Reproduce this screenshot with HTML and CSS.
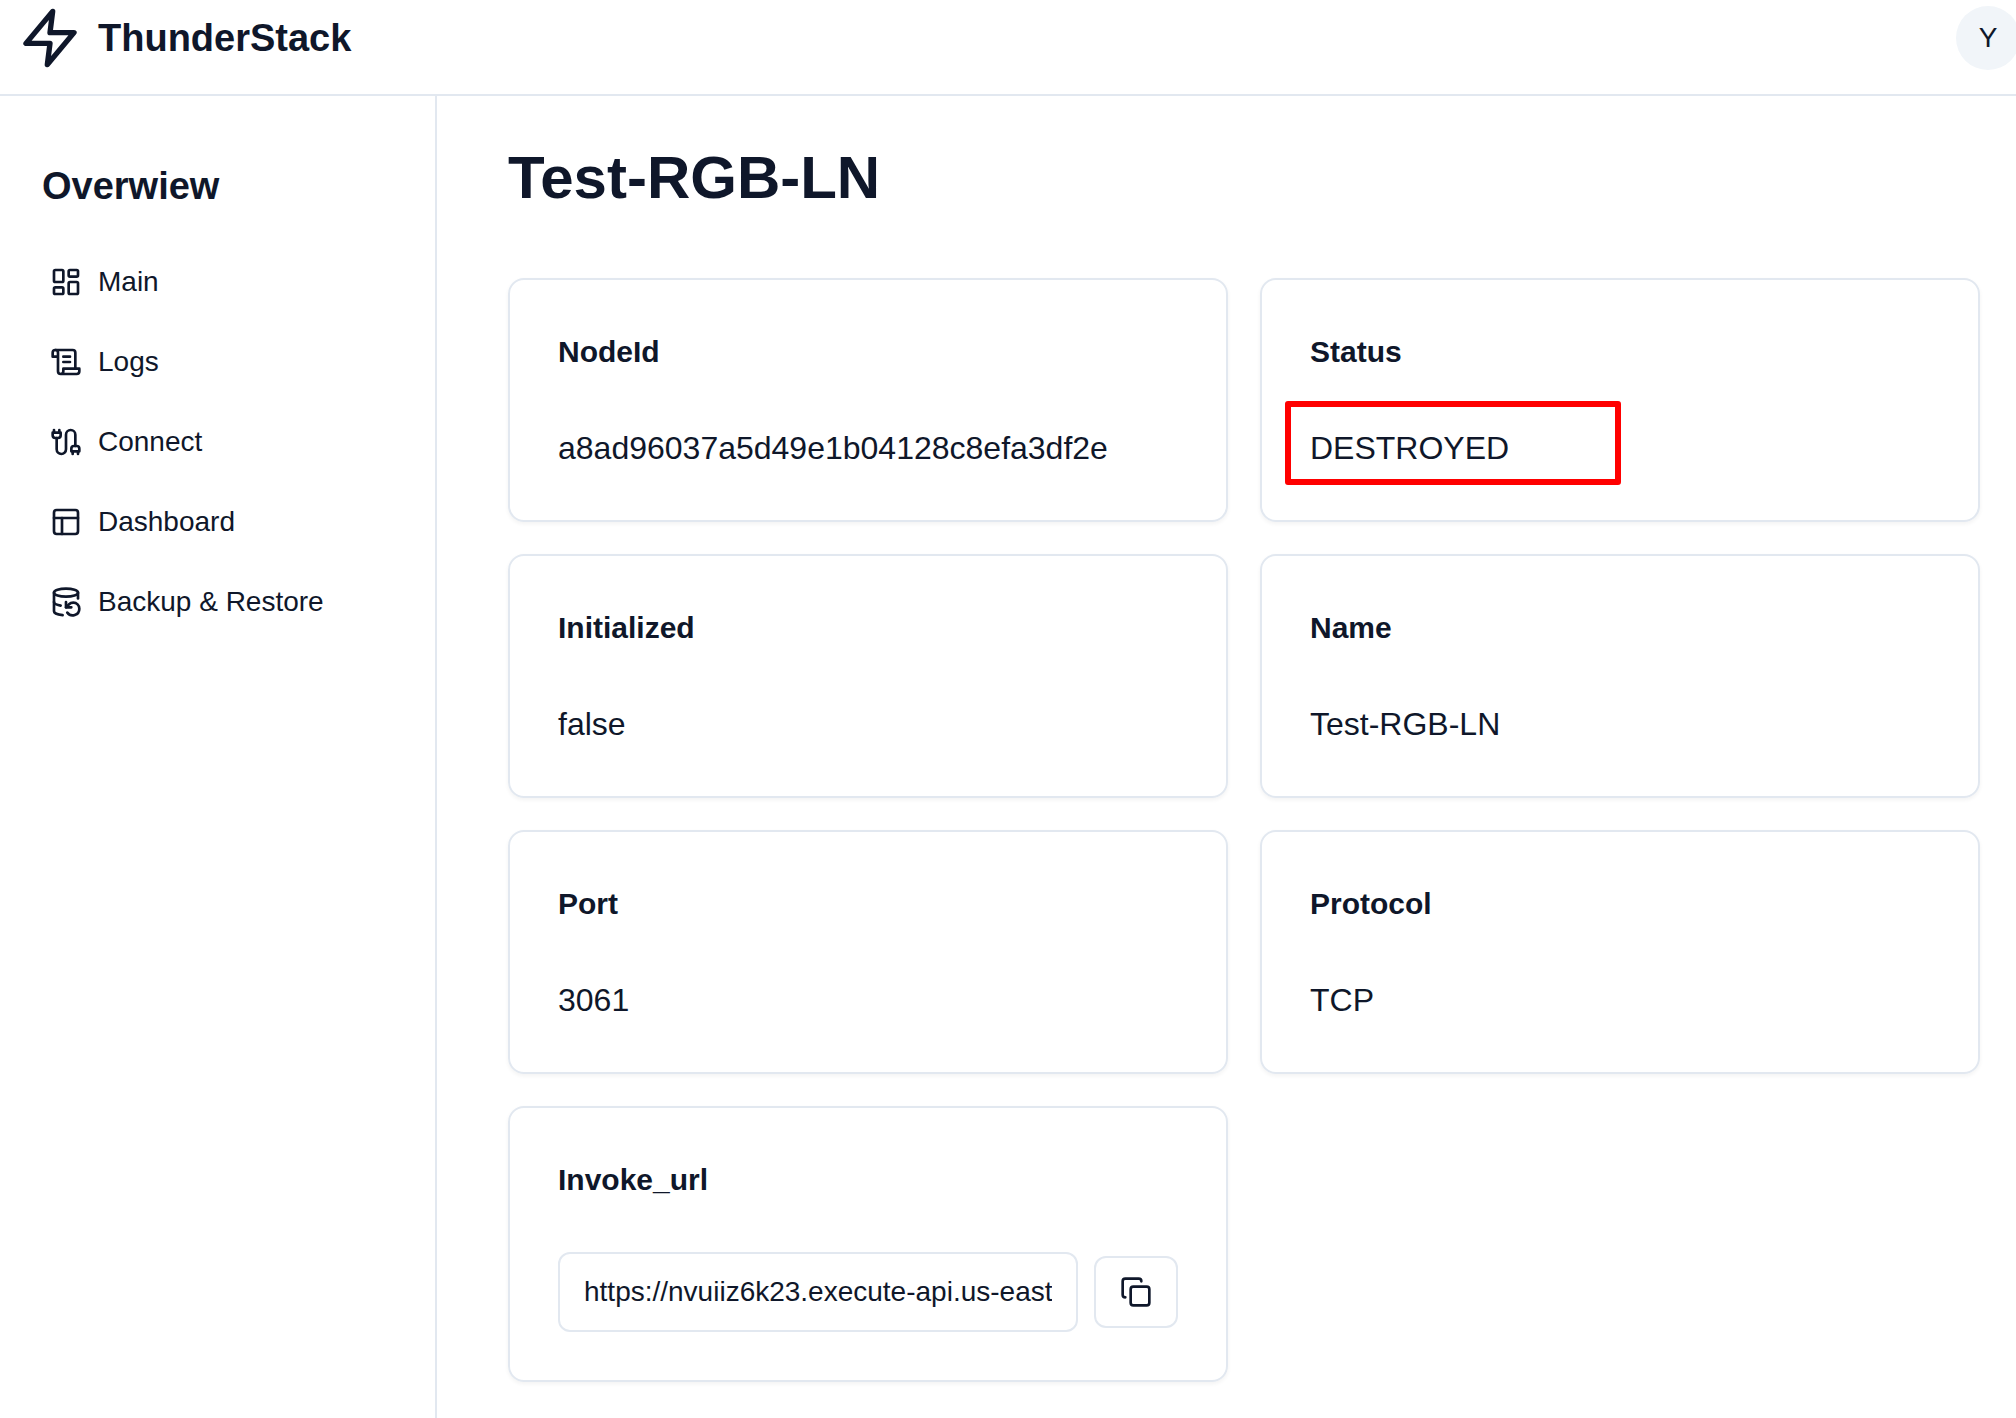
FILE: index.html
```html
<!DOCTYPE html>
<html lang="en">
<head>
  <meta charset="utf-8">
  <meta name="viewport" content="width=device-width, initial-scale=1">
  <title>ThunderStack</title>
  <link rel="stylesheet" href="styles.css">
</head>
<body>
  <header class="header">
    <a class="brand" href="#">
      <svg class="icon brand-icon" viewBox="0 0 24 24" aria-hidden="true"><polygon points="13 2 3 14 12 14 11 22 21 10 12 10 13 2"/></svg>
      <span>ThunderStack</span>
    </a>
    <button class="avatar" type="button">Y</button>
  </header>
  <div class="shell">
    <aside class="sidebar">
      <h2 class="sidebar-title">Overwiew</h2>
      <nav class="nav">
        <a class="nav-item" href="#">
          <svg class="icon" viewBox="0 0 24 24" aria-hidden="true"><rect width="7" height="9" x="3" y="3" rx="1"/><rect width="7" height="5" x="14" y="3" rx="1"/><rect width="7" height="9" x="14" y="12" rx="1"/><rect width="7" height="5" x="3" y="16" rx="1"/></svg>
          <span>Main</span>
        </a>
        <a class="nav-item" href="#">
          <svg class="icon" viewBox="0 0 24 24" aria-hidden="true"><path d="M8 21h12a2 2 0 0 0 2-2v-2H10v2a2 2 0 1 1-4 0V5a2 2 0 1 0-4 0v3h4"/><path d="M19 17V5a2 2 0 0 0-2-2H4"/><path d="M15 8h-5"/><path d="M15 12h-5"/></svg>
          <span>Logs</span>
        </a>
        <a class="nav-item" href="#">
          <svg class="icon" viewBox="0 0 24 24" aria-hidden="true"><path d="M4 9a2 2 0 0 1-2-2V5h6v2a2 2 0 0 1-2 2Z"/><path d="M3 5V3"/><path d="M7 5V3"/><path d="M19 15V6.5a3.5 3.5 0 0 0-7 0v11a3.5 3.5 0 0 1-7 0V9"/><path d="M17 21v-2"/><path d="M21 21v-2"/><path d="M22 19h-6v-2a2 2 0 0 1 2-2h2a2 2 0 0 1 2 2Z"/></svg>
          <span>Connect</span>
        </a>
        <a class="nav-item" href="#">
          <svg class="icon" viewBox="0 0 24 24" aria-hidden="true"><rect width="18" height="18" x="3" y="3" rx="2"/><path d="M3 9h18"/><path d="M9 21V9"/></svg>
          <span>Dashboard</span>
        </a>
        <a class="nav-item" href="#">
          <svg class="icon" viewBox="0 0 24 24" aria-hidden="true"><ellipse cx="12" cy="5" rx="9" ry="3"/><path d="M3 12a9 3 0 0 0 5 2.69"/><path d="M21 9.3V5"/><path d="M3 5v14a9 3 0 0 0 6.47 2.88"/><path d="M12 12v4h4"/><path d="M13 20a5 5 0 0 0 9-3 4.5 4.5 0 0 0-4.5-4.5c-1.33 0-2.54.54-3.41 1.41L12 16"/></svg>
          <span>Backup &amp; Restore</span>
        </a>
      </nav>
    </aside>
    <main class="main">
      <h1 class="page-title">Test-RGB-LN</h1>
      <div class="cards">
        <section class="card">
          <h3 class="card-title">NodeId</h3>
          <p class="card-value">a8ad96037a5d49e1b04128c8efa3df2e</p>
        </section>
        <section class="card">
          <h3 class="card-title">Status</h3>
          <p class="card-value card-value-marked">DESTROYED</p>
        </section>
        <section class="card">
          <h3 class="card-title">Initialized</h3>
          <p class="card-value">false</p>
        </section>
        <section class="card">
          <h3 class="card-title">Name</h3>
          <p class="card-value">Test-RGB-LN</p>
        </section>
        <section class="card">
          <h3 class="card-title">Port</h3>
          <p class="card-value">3061</p>
        </section>
        <section class="card">
          <h3 class="card-title">Protocol</h3>
          <p class="card-value">TCP</p>
        </section>
        <section class="card">
          <h3 class="card-title"><label for="invoke-url">Invoke_url</label></h3>
          <div class="copy-row">
            <input class="url-input" id="invoke-url" type="text" value="https://nvuiiz6k23.execute-api.us-east" readonly>
            <button class="copy-button" type="button" aria-label="Copy">
              <svg class="icon" viewBox="0 0 24 24" aria-hidden="true"><rect width="14" height="14" x="8" y="8" rx="2"/><path d="M4 16c-1.1 0-2-.9-2-2V4c0-1.1.9-2 2-2h10c1.1 0 2 .9 2 2"/></svg>
            </button>
          </div>
        </section>
      </div>
    </main>
  </div>
</body>
</html>
```
FILE: styles.css
```css
:root {
  --ink: #0f172a;
  --line: #e2e8f0;
  --muted: #f1f5f9;
}

*,
*::after {
  box-sizing: border-box;
  margin: 0;
}

body {
  display: flex;
  flex-direction: column;
  min-height: 100vh;
  overflow-x: hidden;
  background: #fff;
  color: var(--ink);
  font: 28px/40px "Liberation Sans", Arial, sans-serif;
}

a {
  color: inherit;
  text-decoration: none;
}

button,
input {
  color: inherit;
  font: inherit;
}

.icon {
  flex: none;
  width: 32px;
  height: 32px;
  fill: none;
  stroke: currentColor;
  stroke-width: 2;
  stroke-linecap: round;
  stroke-linejoin: round;
}

.header {
  display: flex;
  align-items: center;
  justify-content: space-between;
  padding: 6px 0 24px 18px;
  border-bottom: 2px solid var(--line);
}

.brand {
  display: flex;
  align-items: center;
  gap: 16px;
  font-size: 38px;
  font-weight: 700;
}

.brand-icon {
  width: 64px;
  height: 64px;
}

.avatar {
  width: 64px;
  height: 64px;
  margin-right: -4px;
  padding: 0;
  border: 0;
  border-radius: 50%;
  background: var(--muted);
}

.shell {
  display: flex;
  flex: 1;
}

.sidebar {
  flex: none;
  width: 437px;
  padding: 62px 24px 24px 42px;
  border-right: 2px solid var(--line);
}

.sidebar-title {
  margin-bottom: 30px;
  font-size: 38px;
  line-height: 56px;
}

.nav {
  display: flex;
  flex-direction: column;
  gap: 4px;
}

.nav-item {
  display: flex;
  align-items: center;
  gap: 16px;
  padding: 18px 8px;
}

.main {
  flex: 1;
  min-width: 0;
  padding: 46px 36px 36px 71px;
}

.page-title {
  margin-bottom: 64px;
  font-size: 60px;
  line-height: 72px;
}

.cards {
  display: grid;
  grid-template-columns: repeat(2, minmax(0, 1fr));
  gap: 32px;
}

.card {
  display: flex;
  flex-direction: column;
  gap: 48px;
  padding: 48px;
  border: 2px solid var(--line);
  border-radius: 16px;
  box-shadow: 0 2px 4px rgba(0, 0, 0, 0.05);
}

.card-title {
  font-size: 30px;
  line-height: 48px;
}

.card-value {
  font-size: 32px;
  line-height: 48px;
}

.card-value-marked {
  position: relative;
}

.card-value-marked::after {
  content: "";
  position: absolute;
  top: -23px;
  left: -25px;
  width: 336px;
  height: 84px;
  border: 6px solid #f00;
  border-radius: 3px;
}

.copy-row {
  display: flex;
  align-items: center;
  gap: 16px;
}

.url-input {
  flex: 1;
  min-width: 0;
  height: 80px;
  padding: 0 24px;
  border: 2px solid var(--line);
  border-radius: 12px;
  background: #fff;
}

.copy-button {
  display: flex;
  align-items: center;
  justify-content: center;
  width: 84px;
  height: 72px;
  padding: 0;
  border: 2px solid var(--line);
  border-radius: 12px;
  background: #fff;
}
```
